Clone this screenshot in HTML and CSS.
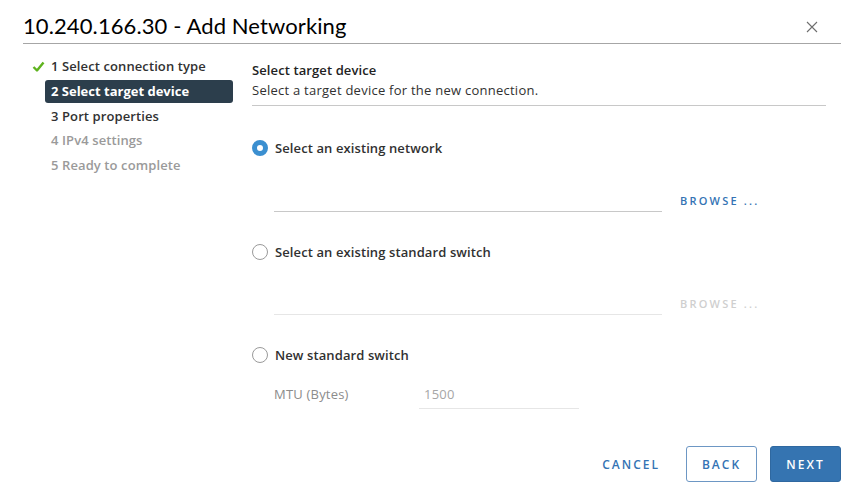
FILE: index.html
```html
<!DOCTYPE html>
<html>
<head>
<meta charset="utf-8">
<link rel="stylesheet" href="styles.css">
</head>
<body>
<div class="dialog">
  <div class="header">
    <h1 class="title">10.240.166.30 - Add Networking</h1>
    <svg class="close" width="12" height="12" viewBox="0 0 12 12"><path d="M1 1L11 11M11 1L1 11" stroke="#6e6e6e" stroke-width="1.1" fill="none"/></svg>
  </div>
  <div class="body">
    <ul class="steps">
      <li class="step done"><svg class="check" width="13" height="11" viewBox="0 0 13 11"><path d="M1.5 6L5 9.5L11.5 1.5" stroke="#5eb31e" stroke-width="2.4" fill="none" stroke-linejoin="round"/></svg><span>1 Select connection type</span></li>
      <li class="step active"><span>2 Select target device</span></li>
      <li class="step"><span>3 Port properties</span></li>
      <li class="step disabled"><span>4 IPv4 settings</span></li>
      <li class="step disabled"><span>5 Ready to complete</span></li>
    </ul>
    <div class="content">
      <div class="page-head">
        <div class="page-title">Select target device</div>
        <div class="page-desc">Select a target device for the new connection.</div>
      </div>
      <div class="option first">
        <span class="radio checked"></span><span class="opt-label">Select an existing network</span>
      </div>
      <div class="field-row first-field">
        <div class="input-line"></div>
        <span class="browse">BROWSE ...</span>
      </div>
      <div class="option">
        <span class="radio"></span><span class="opt-label">Select an existing standard switch</span>
      </div>
      <div class="field-row">
        <div class="input-line light"></div>
        <span class="browse disabled">BROWSE ...</span>
      </div>
      <div class="option">
        <span class="radio"></span><span class="opt-label">New standard switch</span>
      </div>
      <div class="mtu-row">
        <span class="mtu-label">MTU (Bytes)</span>
        <span class="mtu-input">1500</span>
      </div>
    </div>
  </div>
  <div class="footer">
    <span class="btn-link">CANCEL</span>
    <span class="btn outline">BACK</span>
    <span class="btn primary">NEXT</span>
  </div>
</div>
</body>
</html>
```
FILE: styles.css
```css
* { box-sizing: border-box; }
html, body { margin: 0; padding: 0; background: #fff; }
body { font-family: "Open Sans", "Lato", sans-serif; color: #313131; width: 864px; height: 489px; overflow: hidden; }
.dialog { padding: 0 23px 0 23px; }
.header { display: flex; align-items: center; justify-content: space-between; height: 44px; border-bottom: 1px solid #a6a6a6; padding-top: 8px; }
.title { margin: 0; font-family: "Lato", sans-serif; font-size: 22px; font-weight: 400; color: #000; letter-spacing: 0.1px; }
.close { margin-right: 23px; margin-top: 2px; }
.body { display: flex; height: 402px; }
.steps { list-style: none; margin: 0; padding: 10px 0 0 8px; width: 229px; }
.step { display: flex; align-items: center; height: 24.7px; font-size: 13px; font-weight: 600; letter-spacing: 0.1px; color: #313131; padding-left: 20px; position: relative; }
.step span { display: block; }
.step .check { position: absolute; left: 1px; top: 7px; }
.step.active span { background: #2c3e4c; color: #fff; border-radius: 3px; margin-left: -6px; padding: 0 6px; width: 188px; height: 23px; line-height: 23px; font-weight: 700; letter-spacing: 0; }
.step.disabled { color: #9a9a9a; }
.content { flex: 0 0 574px; padding-top: 16px; }
.page-head { border-bottom: 1px solid #c8c8c8; padding-bottom: 4px; }
.page-title { font-size: 13px; font-weight: 600; letter-spacing: 0.1px; color: #222; line-height: 20px; }
.page-desc { font-size: 13px; letter-spacing: 0.25px; color: #313131; line-height: 21px; }
.option { display: flex; align-items: center; height: 18px; margin-top: 0; }
.option.first { margin-top: 33px; }
.radio { width: 16px; height: 16px; border-radius: 50%; border: 1px solid #9a9a9a; margin-right: 7px; flex: none; background: #fff; }
.radio.checked { border: 5px solid #3b8fd0; background: #fff; }
.opt-label { font-size: 13px; font-weight: 600; letter-spacing: 0.1px; color: #313131; }
.field-row { display: flex; align-items: flex-end; margin: 22px 0 31px 22px; height: 32px; }
.field-row.first-field { margin-top: 23px; }
.input-line { width: 388px; border-bottom: 1px solid #c8c8c8; height: 1px; margin-bottom: 0; }
.input-line.light { border-bottom-color: #e6e6e6; }
.browse { font-size: 11px; font-weight: 600; letter-spacing: 2.2px; color: #3473b4; margin-left: 18px; margin-bottom: 4px; }
.browse.disabled { color: #cfcfcf; }
.mtu-row { display: flex; align-items: flex-end; margin: 21px 0 0 22px; }
.mtu-label { font-size: 13px; letter-spacing: 0.2px; color: #8c8c8c; width: 145px; padding-bottom: 6px; }
.mtu-input { width: 160px; font-size: 13px; letter-spacing: 0.2px; color: #a6a6a6; border-bottom: 1px solid #e6e6e6; padding: 0 0 5px 5px; }
.footer { display: flex; justify-content: flex-end; align-items: center; padding-right: 0; }
.btn-link, .btn { font-size: 12px; font-weight: 600; letter-spacing: 2px; height: 36px; display: flex; align-items: center; justify-content: center; }
.btn-link { color: #3473b4; padding: 0 0; margin-right: 26px; }
.btn { width: 71px; border-radius: 3px; }
.btn.outline { border: 1px solid #6d97c4; color: #3473b4; margin-right: 13px; }
.btn.primary { background: #3574b1; color: #fff; border: 1px solid #2f68a0; }
```
